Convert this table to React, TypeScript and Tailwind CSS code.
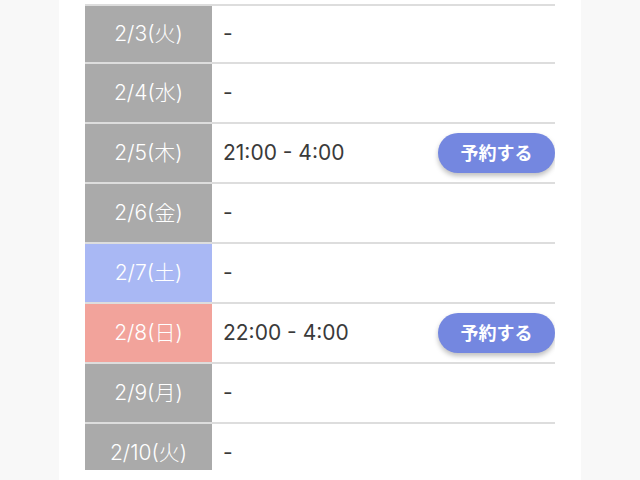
const rows = [
  { date: "2/3(火)", time: "-", tone: "gray" },
  { date: "2/4(水)", time: "-", tone: "gray" },
  { date: "2/5(木)", time: "21:00 - 4:00", tone: "gray", reserve: true },
  { date: "2/6(金)", time: "-", tone: "gray" },
  { date: "2/7(土)", time: "-", tone: "blue" },
  { date: "2/8(日)", time: "22:00 - 4:00", tone: "red", reserve: true },
  { date: "2/9(月)", time: "-", tone: "gray" },
  { date: "2/10(火)", time: "-", tone: "gray" },
];

const toneClass: Record<string, string> = {
  gray: "bg-[#aaaaaa]",
  blue: "bg-[#a9b8f4]",
  red: "bg-[#f2a39b]",
};

export default function App() {
  return (
    <div
      className="flex h-[480px] w-[640px] justify-center overflow-hidden bg-[#f8f8f8]"
      style={{ fontFamily: 'Inter, "Noto Sans CJK JP", sans-serif' }}
    >
      <div className="flex w-[522px] flex-col bg-white px-[26px]">
        <div className="mt-[4px] h-[466px] overflow-hidden">
          {rows.map((r, i) => (
            <div
              key={r.date}
              className={`flex border-t-2 border-[#dddddd] ${i === 0 ? "h-[58px]" : "h-[60px]"}`}
            >
              <div
                className={`flex w-[127px] shrink-0 items-center justify-center text-[21px] font-light text-white ${toneClass[r.tone]}`}
              >
                {r.date}
              </div>
              <div className="flex flex-1 items-center justify-between pl-[11px] text-[21px] text-[#3a3a3a]">
                <span>{r.time}</span>
                {r.reserve && (
                  <button className="flex h-[40px] w-[117px] items-center justify-center rounded-full bg-[#7487e0] text-[18px] font-bold text-white shadow-[0_3px_5px_rgba(0,0,0,0.25)]">
                    予約する
                  </button>
                )}
              </div>
            </div>
          ))}
        </div>
      </div>
    </div>
  );
}
